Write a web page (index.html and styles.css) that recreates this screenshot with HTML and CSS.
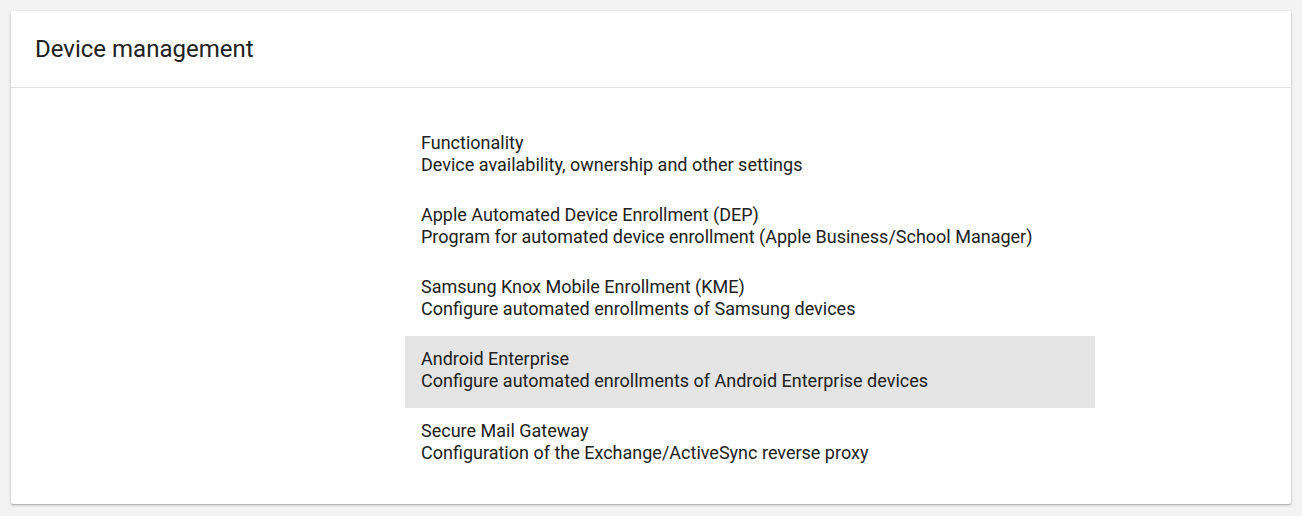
FILE: index.html
```html
<!DOCTYPE html>
<html lang="en">
<head>
    <meta charset="UTF-8">
    <meta name="viewport" content="width=device-width, initial-scale=1.0">
    <title>Device management</title>
    <link rel="stylesheet" href="styles.css">
</head>
<body>
    <div class="card">
        <div class="card-header">
            <h1>Device management</h1>
        </div>

        <div class="card-body">
            <ul class="settings-list">
                <li class="settings-item">
                    <div class="item-title">Functionality</div>
                    <div class="item-desc">Device availability, ownership and other settings</div>
                </li>
                <li class="settings-item">
                    <div class="item-title">Apple Automated Device Enrollment (DEP)</div>
                    <div class="item-desc">Program for automated device enrollment (Apple Business/School Manager)</div>
                </li>
                <li class="settings-item">
                    <div class="item-title">Samsung Knox Mobile Enrollment (KME)</div>
                    <div class="item-desc">Configure automated enrollments of Samsung devices</div>
                </li>
                <li class="settings-item active">
                    <div class="item-title">Android Enterprise</div>
                    <div class="item-desc">Configure automated enrollments of Android Enterprise devices</div>
                </li>
                <li class="settings-item">
                    <div class="item-title">Secure Mail Gateway</div>
                    <div class="item-desc">Configuration of the Exchange/ActiveSync reverse proxy</div>
                </li>
            </ul>
        </div>
    </div>
</body>
</html>
```

FILE: styles.css
```css
* {
    margin: 0;
    padding: 0;
    box-sizing: border-box;
    font-family: Roboto, 'Liberation Sans', sans-serif;
}

body {
    background-color: #f3f3f3;
    padding: 11px;
    color: #212121;
}

.card {
    width: 1280px;
    background-color: white;
    border-radius: 2px;
    box-shadow: 0 1px 3px rgba(0, 0, 0, 0.25), 0 1px 1px rgba(0, 0, 0, 0.12);
}

.card-header {
    height: 77px;
    display: flex;
    align-items: center;
    padding: 0 24px;
    border-bottom: 1px solid #e0e0e0;
}

.card-header h1 {
    font-size: 24px;
    font-weight: 400;
    color: #212121;
}

.card-body {
    padding: 32px 0 24px 394px;
}

.settings-list {
    list-style-type: none;
    width: 690px;
}

.settings-item {
    height: 72px;
    padding: 12px 16px 0;
    font-size: 18px;
    line-height: 22px;
    cursor: pointer;
}

.settings-item.active {
    background-color: #e4e4e4;
}

.item-title,
.item-desc {
    white-space: nowrap;
}
```
